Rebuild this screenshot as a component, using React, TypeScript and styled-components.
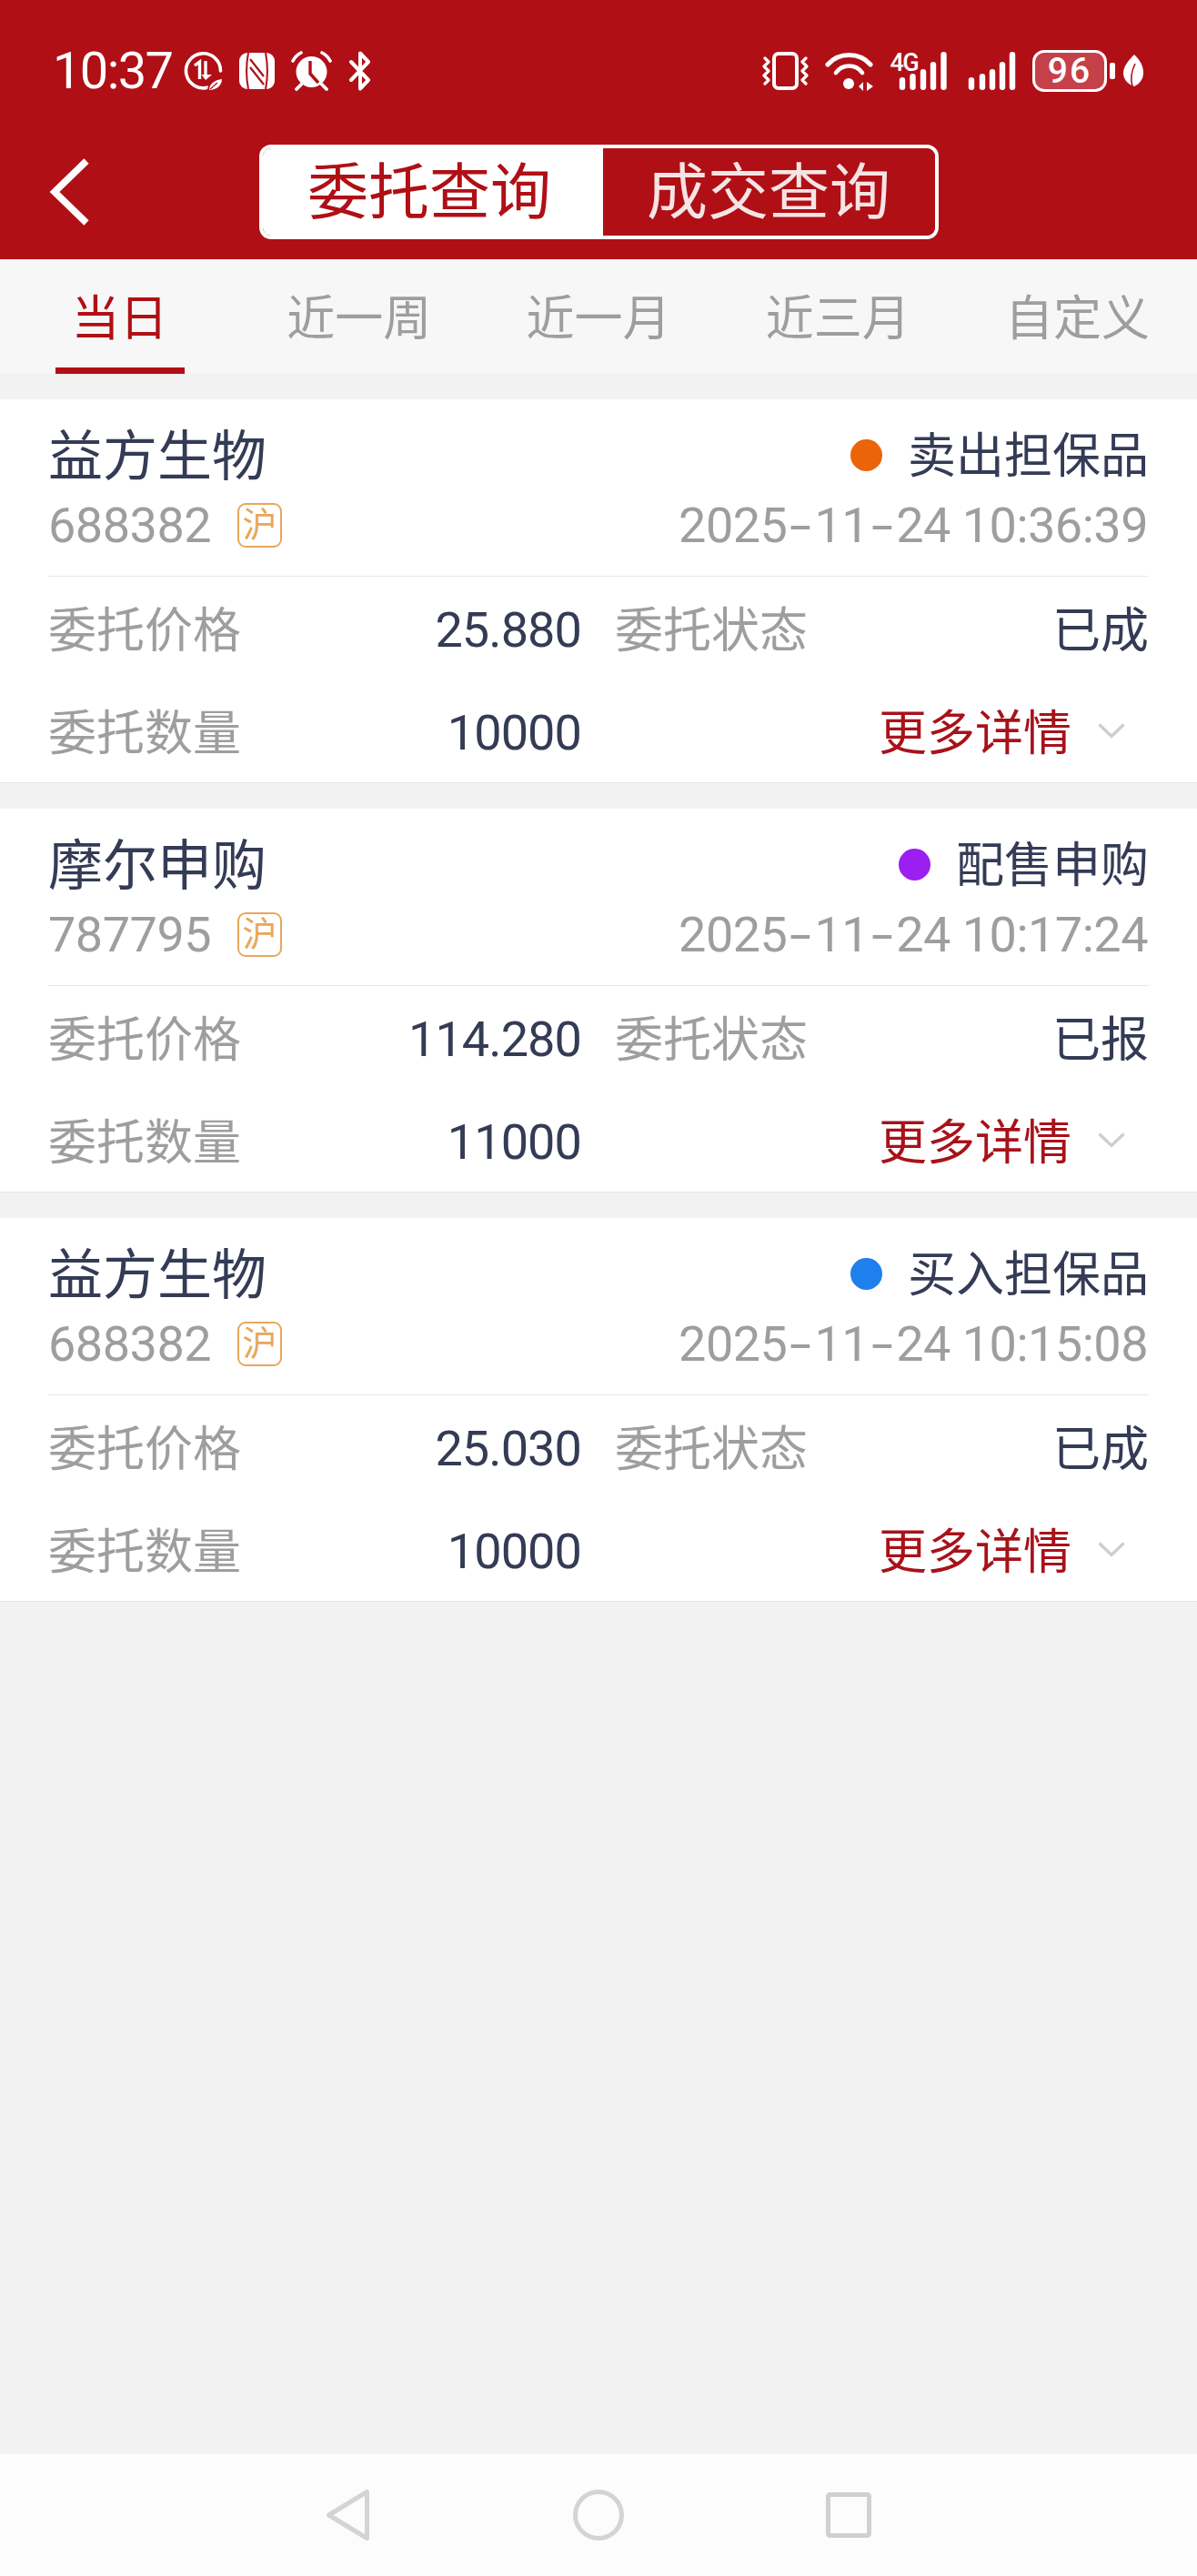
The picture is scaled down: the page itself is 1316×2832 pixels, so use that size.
import React from 'react';
import styled, { createGlobalStyle } from 'styled-components';

const RED = '#b00f16';
const INK = '#343b55';
const GREY = '#9e9e9e';
const FONT = `Roboto, "Noto Sans CJK SC", "Noto Sans", sans-serif`;

const Global = createGlobalStyle`
  html, body { margin: 0; padding: 0; background: #f2f2f2; }
  body { font-family: ${FONT}; }
  * { box-sizing: border-box; }
`;

const Page = styled.div`
  width: 1316px;
  height: 2832px;
  display: flex;
  flex-direction: column;
  background: #f2f2f2;
  overflow: hidden;
`;

const Header = styled.header`
  height: 285px;
  background: ${RED};
  display: flex;
  flex-direction: column;
`;

const StatusBar = styled.div`
  height: 159px;
  padding: 55px 59px 0 58px;
  display: flex;
  justify-content: space-between;
  align-items: flex-start;
  color: #fff;
`;

const StatusGroup = styled.div`
  display: flex;
  align-items: center;
  height: 46px;
`;

const Clock = styled.span`
  font-size: 56px;
  line-height: 46px;
  letter-spacing: -1.6px;
  width: 144px;
  font-weight: 400;
`;

const Svg = styled.svg<{ $ml?: number }>`
  display: block;
  flex: none;
  margin-left: ${(p) => p.$ml ?? 0}px;
`;

const SignalWrap = styled.div`
  position: relative;
  flex: none;
  margin-left: 19px;
`;

const SignalTag = styled.span`
  position: absolute;
  left: 0;
  top: 0;
  font-size: 27px;
  font-weight: 500;
  line-height: 26px;
  letter-spacing: -1.5px;
  color: #fff;
`;

const Battery = styled.div`
  width: 82px;
  height: 46px;
  margin-left: 18px;
  border: 3px solid #fff;
  border-radius: 13px;
  background: #c6404a;
  font-size: 39px;
  font-weight: 500;
  line-height: 40px;
  letter-spacing: 2px;
  text-align: center;
  color: #fff;
`;

const NavRow = styled.div`
  height: 104px;
  display: grid;
  grid-template-columns: 1fr auto 1fr;
  align-items: center;
  padding-left: 54px;
`;

const Segment = styled.div`
  width: 747px;
  height: 104px;
  margin-left: -54px;
  display: grid;
  grid-template-columns: 374px 1fr;
  border: 4px solid #fff;
  border-radius: 13px;
  overflow: hidden;
`;

const SegmentItem = styled.div<{ $active?: boolean }>`
  display: flex;
  align-items: center;
  justify-content: center;
  font-size: 67px;
  line-height: 1;
  padding-top: 3px;
  padding-right: ${(p) => (p.$active ? 7 : 0)}px;
  background: ${(p) => (p.$active ? '#fff' : RED)};
  color: ${(p) => (p.$active ? RED : '#f6e4e4')};
`;

const Tabs = styled.nav`
  height: 126px;
  background: #f7f7f7;
  display: grid;
  grid-template-columns: repeat(5, 1fr);
`;

const Tab = styled.div`
  display: flex;
  justify-content: center;
`;

const TabLabel = styled.div<{ $active?: boolean }>`
  width: 142px;
  display: flex;
  align-items: center;
  justify-content: center;
  white-space: nowrap;
  font-size: 53px;
  padding-bottom: 5px;
  color: ${(p) => (p.$active ? RED : GREY)};
  border-top: 7px solid transparent;
  border-bottom: 7px solid ${(p) => (p.$active ? RED : 'transparent')};
`;

const List = styled.main`
  flex: 1;
  padding-top: 28px;
  display: flex;
  flex-direction: column;
  gap: 28px;
`;

const Card = styled.article`
  background: #fff;
  padding: 30px 53px 0;
  border-bottom: 1px solid #e6e6e6;
`;

const TitleRow = styled.div`
  height: 62px;
  display: flex;
  justify-content: space-between;
  align-items: center;
`;

const Name = styled.div`
  font-size: 60px;
  line-height: 62px;
  color: ${INK};
  padding-top: 6px;
`;

const Side = styled.div`
  display: flex;
  align-items: center;
  font-size: 53px;
  color: ${INK};
`;

const SideText = styled.span`
  padding-bottom: 6px;
`;

const Dot = styled.span<{ $color: string }>`
  width: 35px;
  height: 35px;
  border-radius: 50%;
  margin-right: 28px;
  background: ${(p) => p.$color};
`;

const SubRow = styled.div`
  height: 62px;
  margin: 15px 0 25px;
  display: flex;
  justify-content: space-between;
  align-items: center;
  font-size: 54px;
  letter-spacing: -0.5px;
  color: ${GREY};
`;

const Code = styled.div`
  display: flex;
  align-items: center;
`;

const Market = styled.span`
  width: 49px;
  height: 49px;
  margin-left: 29px;
  border: 2px solid #e8a75b;
  border-radius: 9px;
  display: flex;
  align-items: center;
  justify-content: center;
  font-size: 38px;
  line-height: 1;
  letter-spacing: 0;
  color: #e8a75b;
`;

const Time = styled.span`
  white-space: nowrap;
  margin-right: 1px;
`;

const Dash = styled.span`
  display: inline-block;
  width: 30px;
  text-align: center;
  letter-spacing: 0;
  transform: scaleX(1.6);
`;

const Divider = styled.div`
  height: 1px;
  background: #e8e8e8;
`;

const Grid = styled.div`
  display: grid;
  grid-template-columns: 585px 1fr;
  column-gap: 38px;
  grid-auto-rows: 113px;
`;

const Cell = styled.div`
  display: flex;
  justify-content: space-between;
  align-items: center;
  font-size: 53px;
`;

const Label = styled.span`
  color: ${GREY};
  padding-bottom: 4px;
`;

const Value = styled.span`
  color: ${INK};
  font-size: 54px;
  letter-spacing: -0.9px;
  padding-top: 4px;
  margin-right: -1px;
`;

const StatusValue = styled.span`
  color: ${INK};
  padding-bottom: 4px;
`;

const MoreCell = styled.div`
  display: flex;
  justify-content: flex-end;
  align-items: center;
  font-size: 53px;
  color: #a8121a;
  padding-right: 26px;
`;

const MoreText = styled.span`
  padding-bottom: 4px;
`;

const SysNav = styled.footer`
  height: 134px;
  background: #fcfcfc;
  display: grid;
  grid-template-columns: repeat(3, 275px);
  justify-content: center;
  align-items: center;
  justify-items: center;
`;

const Back = () => (
  <Svg width="46" height="74" viewBox="0 0 46 74">
    <path d="M41 3 L6 37 L41 71" fill="none" stroke="#fff" strokeWidth="7.5" />
  </Svg>
);

const DataSaver = () => (
  <Svg width="43" height="43" viewBox="0 0 43 43">
    <path d="M27 39 A19 19 0 1 1 40.5 21" fill="none" stroke="#fff" strokeWidth="3.6" strokeLinecap="round" />
    <path d="M12 15 L17.5 11 V30" fill="none" stroke="#fff" strokeWidth="3.4" />
    <path d="M24 10 V28" fill="none" stroke="#fff" strokeWidth="3.4" />
    <path d="M19.5 25 L24 31 L31 25 Z" fill="#fff" />
    <path d="M26 43 C26 33 33 28 43 28 C43 38 36 43 26 43 Z" fill={RED} />
    <path d="M28 42 C28 35 34 31 42 30 C42 37 36 42 28 42 Z" fill="#fff" />
    <path d="M29 41 L37 34" stroke={RED} strokeWidth="1.2" />
  </Svg>
);

const Nfc = () => (
  <Svg $ml={18} width="39" height="40" viewBox="0 0 39 40">
    <rect x="0" y="0" width="39" height="40" rx="9" fill="#fff" />
    <path d="M10 0 C7.5 13 7.5 27 10 40 M29 0 C31.5 13 31.5 27 29 40" stroke={RED} strokeWidth="2" fill="none" />
    <path d="M12 7 L27 26 M12 16 L27 35" stroke={RED} strokeWidth="2.2" fill="none" />
  </Svg>
);

const Alarm = () => (
  <Svg $ml={18} width="45" height="44" viewBox="0 0 45 44">
    <circle cx="22.5" cy="23" r="17" fill="#fff" />
    <path d="M21 11 V25 L30 35" fill="none" stroke={RED} strokeWidth="3.4" />
    <path d="M2 11 C4 7 7 4 11 2 M34 2 C38 4 41 7 43 11" fill="none" stroke="#fff" strokeWidth="3.6" strokeLinecap="round" />
    <path d="M11 37 L6 42 M34 37 L39 42" fill="none" stroke="#fff" strokeWidth="3.8" strokeLinecap="round" />
  </Svg>
);

const Bluetooth = () => (
  <Svg $ml={18} width="26" height="44" viewBox="0 0 26 44">
    <path d="M3 32 L22 12 L13 2.5 V21 M3 12 L22 32 L13 41.5 V24" fill="none" stroke="#fff" strokeWidth="4" strokeLinecap="round" strokeLinejoin="round" />
  </Svg>
);

const Vibrate = () => (
  <Svg width="51" height="42" viewBox="0 0 51 42">
    <rect x="13" y="2" width="25" height="38" rx="5" fill="none" stroke="#fff" strokeWidth="4" />
    <path d="M3 7 L7 11 L2 16 L7 21 L2 26 L7 31 L3 35 M48 7 L44 11 L49 16 L44 21 L49 26 L44 31 L48 35" fill="none" stroke="#fff" strokeWidth="3.2" strokeLinecap="round" strokeLinejoin="round" />
  </Svg>
);

const Wifi = () => (
  <Svg $ml={18} width="53" height="44" viewBox="0 0 53 44">
    <path d="M3 15 C15 1 38 1 50 15" fill="none" stroke="#fff" strokeWidth="5" strokeLinecap="round" />
    <path d="M12 24 C19 14 34 14 41 24" fill="none" stroke="#fff" strokeWidth="4.6" strokeLinecap="round" />
    <circle cx="26" cy="36" r="6" fill="#fff" />
    <path d="M37 39 L42 34 V44 Z M46 34 L53 39 L46 44 Z" fill="#fff" />
  </Svg>
);

const Bars = ({ xs, ml = 0 }: { xs: number[]; ml?: number }) => {
  const heights = [14, 18, 23, 31, 42];
  const width = xs[4] + 4;
  return (
    <Svg $ml={ml} width={width} height="44" viewBox={`0 0 ${width} 44`}>
      {xs.map((x, i) => (
        <rect key={x} x={x - 3.2} y={43 - heights[i]} width="6.4" height={heights[i]} rx="3.2" fill="#fff" />
      ))}
    </Svg>
  );
};

const BatteryNub = () => (
  <Svg $ml={3} width="6" height="18" viewBox="0 0 6 18">
    <rect width="6" height="18" rx="2" fill="#fff" />
  </Svg>
);

const Leaf = () => (
  <Svg $ml={9} width="22" height="36" viewBox="0 0 22 36">
    <path d="M12 0 C18 6 22 12 22 20 C22 27 18 32 12 35 C4 32 0 27 0 20 C0 13 6 6 12 0 Z" fill="#fff" />
    <path d="M10 35 C8 28 9 18 13 10" fill="none" stroke={RED} strokeWidth="1.6" />
  </Svg>
);

const Chevron = () => (
  <Svg $ml={29} width="30" height="17" viewBox="0 0 30 17">
    <path d="M1.5 1.5 L15 14.5 L28.5 1.5" fill="none" stroke="#cdced3" strokeWidth="3.4" />
  </Svg>
);

const NavBack = () => (
  <Svg width="50" height="58" viewBox="0 0 50 58">
    <path d="M45.5 3.5 V54.5 L3.5 29 Z" fill="none" stroke="#d4d4d4" strokeWidth="5" strokeLinejoin="round" />
  </Svg>
);

const NavHome = () => (
  <Svg width="56" height="56" viewBox="0 0 56 56">
    <circle cx="28" cy="28" r="25.5" fill="none" stroke="#d4d4d4" strokeWidth="5" />
  </Svg>
);

const NavRecent = () => (
  <Svg width="50" height="50" viewBox="0 0 50 50">
    <rect x="2.5" y="2.5" width="45" height="45" rx="2" fill="none" stroke="#d0d0d0" strokeWidth="5" />
  </Svg>
);

type Order = {
  name: string;
  code: string;
  side: string;
  dot: string;
  time: string;
  price: string;
  status: string;
  qty: string;
};

const orders: Order[] = [
  { name: '益方生物', code: '688382', side: '卖出担保品', dot: '#ec6408', time: '2025-11-24 10:36:39', price: '25.880', status: '已成', qty: '10000' },
  { name: '摩尔申购', code: '787795', side: '配售申购', dot: '#9a1ff0', time: '2025-11-24 10:17:24', price: '114.280', status: '已报', qty: '11000' },
  { name: '益方生物', code: '688382', side: '买入担保品', dot: '#1f7fec', time: '2025-11-24 10:15:08', price: '25.030', status: '已成', qty: '10000' },
];

const tabs = ['当日', '近一周', '近一月', '近三月', '自定义'];

const Stamp = ({ value }: { value: string }) => {
  const parts = value.split('-');
  return (
    <Time>
      {parts.map((part, i) => (
        <React.Fragment key={i}>
          {i > 0 && <Dash>-</Dash>}
          {part}
        </React.Fragment>
      ))}
    </Time>
  );
};

export default function App() {
  return (
    <Page>
      <Global />
      <Header>
        <StatusBar>
          <StatusGroup>
            <Clock>10:37</Clock>
            <DataSaver />
            <Nfc />
            <Alarm />
            <Bluetooth />
          </StatusGroup>
          <StatusGroup>
            <Vibrate />
            <Wifi />
            <SignalWrap>
              <SignalTag>4G</SignalTag>
              <Bars xs={[13, 24.5, 36, 47, 58.5]} />
            </SignalWrap>
            <Bars xs={[4, 16, 27, 38, 49]} ml={23} />
            <Battery>96</Battery>
            <BatteryNub />
            <Leaf />
          </StatusGroup>
        </StatusBar>
        <NavRow>
          <Back />
          <Segment>
            <SegmentItem $active>委托查询</SegmentItem>
            <SegmentItem>成交查询</SegmentItem>
          </Segment>
        </NavRow>
      </Header>
      <Tabs>
        {tabs.map((t, i) => (
          <Tab key={t}>
            <TabLabel $active={i === 0}>{t}</TabLabel>
          </Tab>
        ))}
      </Tabs>
      <List>
        {orders.map((o) => (
          <Card key={o.time}>
            <TitleRow>
              <Name>{o.name}</Name>
              <Side>
                <Dot $color={o.dot} />
                <SideText>{o.side}</SideText>
              </Side>
            </TitleRow>
            <SubRow>
              <Code>
                {o.code}
                <Market>沪</Market>
              </Code>
              <Stamp value={o.time} />
            </SubRow>
            <Divider />
            <Grid>
              <Cell>
                <Label>委托价格</Label>
                <Value>{o.price}</Value>
              </Cell>
              <Cell>
                <Label>委托状态</Label>
                <StatusValue>{o.status}</StatusValue>
              </Cell>
              <Cell>
                <Label>委托数量</Label>
                <Value>{o.qty}</Value>
              </Cell>
              <MoreCell>
                <MoreText>更多详情</MoreText>
                <Chevron />
              </MoreCell>
            </Grid>
          </Card>
        ))}
      </List>
      <SysNav>
        <NavBack />
        <NavHome />
        <NavRecent />
      </SysNav>
    </Page>
  );
}
